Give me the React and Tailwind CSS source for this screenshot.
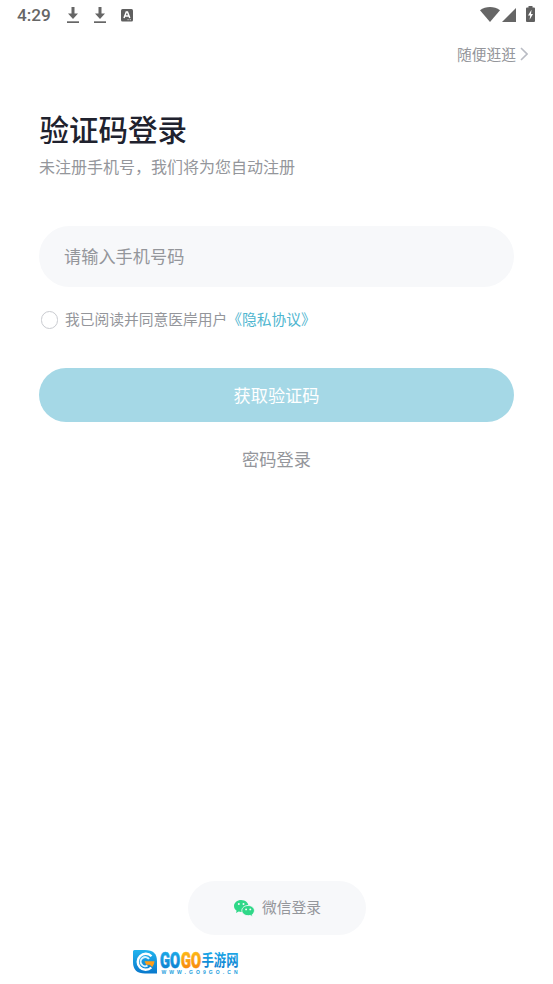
import React from "react";

const DownloadIcon = () => (
  <svg width="12" height="17" viewBox="0 0 12 17" fill="#666666">
    <path d="M4.500 0h3v6.500H11L6 12 1 6.500h3.500z" />
    <rect x="0" y="14.300" width="12" height="1.700" />
  </svg>
);

const KeyboardIcon = () => (
  <svg width="12" height="13" viewBox="0 0 12 13">
    <rect width="12" height="12.500" rx="1.500" fill="#5f5f5f" />
    <path
      d="M3 9 5.300 3h1.200L8.800 9M4 7h3.800"
      fill="none"
      stroke="#fff"
      strokeWidth="1.500"
    />
    <path d="M6.500 10.700h1.200M8.700 10.700h1.300" stroke="#ddd" strokeWidth="0.900" />
  </svg>
);

const WifiIcon = () => (
  <svg width="20" height="15" viewBox="0 0 20 15" fill="#666666">
    <path d="M0 3.300C5.800-1.100 14.200-1.100 20 3.300L10 15z" />
  </svg>
);

const SignalIcon = () => (
  <svg width="14" height="14" viewBox="0 0 14 14" fill="#666666">
    <path d="M14 0v14H0z" />
  </svg>
);

const BatteryIcon = () => (
  <svg width="9" height="16" viewBox="0 0 9 16">
    <path
      d="M2.500 0h4v1.600H8q1 0 1 1V15q0 1-1 1H1q-1 0-1-1V2.600q0-1 1-1h1.500z"
      fill="#606060"
    />
    <path d="M5.500 3.800 2 9.500h2.200l-.6 4.300L7 8H5z" fill="#fff" />
  </svg>
);

const WechatIcon = () => (
  <svg width="21" height="17" viewBox="0 0 21 17">
    <g fill="#2fd888">
      <path d="M7.200 0C3.200 0 0 2.700 0 6.100c0 1.900 1 3.600 2.600 4.700L2 13l2.700-1.400c.8.200 1.700.4 2.600.4 4 0 7.200-2.600 7.200-5.900S11.200 0 7.200 0z" />
      <path
        d="M14.200 5.500c-3.600 0-6.400 2.300-6.400 5.100s2.800 5.100 6.400 5.100c.8 0 1.500-.1 2.200-.3l2.400 1.400-.6-2.100c1.400-.9 2.200-2.400 2.200-4.100 0-2.800-2.700-5.100-6.200-5.100z"
        stroke="#f7f8fa"
        strokeWidth="0.900"
      />
    </g>
    <g fill="#f7f8fa">
      <circle cx="4.800" cy="3.900" r="1" />
      <circle cx="9.500" cy="3.900" r="1" />
      <circle cx="12.100" cy="9.400" r="0.950" />
      <circle cx="16.300" cy="9.400" r="0.950" />
    </g>
  </svg>
);

const SiteLogo = () => (
  <svg width="108" height="28" viewBox="0 0 108 28" className="overflow-visible">
    <defs>
      <linearGradient id="blue" x1="0" y1="0" x2="0" y2="1">
        <stop offset="0" stopColor="#22b4ee" />
        <stop offset="1" stopColor="#0878cc" />
      </linearGradient>
      <linearGradient id="orange" x1="0" y1="0" x2="0" y2="1">
        <stop offset="0" stopColor="#ffc81a" />
        <stop offset="1" stopColor="#f77c08" />
      </linearGradient>
    </defs>
    <path d="M2.500 1H13q12 0 12 11v12.500H13Q1 24.500 1 13V2.500Q1 1 2.500 1z" fill="url(#blue)" />
    <path
      d="M19.500 7.300A8 8 0 1 0 19.300 18.500"
      fill="none"
      stroke="#fff"
      strokeWidth="2.400"
    />
    <path
      d="M17 10A4.600 4.600 0 1 0 15.500 16.700"
      fill="none"
      stroke="#d9f3ff"
      strokeWidth="2"
    />
    <path d="M12.500 12.300H22.500q0 3-2.300 5.700l-2.500-2.300h-3.500z" fill="#ff9d18" />
    <g
      fontFamily="'Roboto', 'Liberation Sans', sans-serif"
      fontWeight="900"
      fontSize="22.500"
      strokeWidth="0.700"
    >
      <text
        x="28"
        y="18.500"
        textLength="20"
        lengthAdjust="spacingAndGlyphs"
        fill="url(#blue)"
        stroke="url(#blue)"
      >
        GO
      </text>
      <text
        x="49"
        y="18.500"
        textLength="20"
        lengthAdjust="spacingAndGlyphs"
        fill="url(#orange)"
        stroke="url(#orange)"
      >
        GO
      </text>
    </g>
    <text
      x="69.500"
      y="17"
      textLength="37"
      lengthAdjust="spacingAndGlyphs"
      fontFamily="'Noto Sans CJK SC', sans-serif"
      fontWeight="700"
      fontSize="15.500"
      fill="url(#blue)"
    >
      手游网
    </text>
    <text
      x="29.500"
      y="24.800"
      textLength="76"
      fontFamily="'Liberation Sans', sans-serif"
      fontWeight="700"
      fontSize="5"
      fill="#1c9ddd"
    >
      WWW.GO9GO.CN
    </text>
  </svg>
);

const StatusBar = () => (
  <div className="flex h-8 items-start justify-between pl-[17px] pr-[18px]">
    <div className="flex items-start">
      <span className="mt-[5px] w-[50px] font-[Roboto] text-[17.200px] leading-5 text-[#666666] font-medium">
        4:29
      </span>
      <span className="mt-[7px] flex items-start gap-[15px]">
        <DownloadIcon />
        <DownloadIcon />
        <span className="mt-[2px]">
          <KeyboardIcon />
        </span>
      </span>
    </div>
    <div className="flex items-start pt-[7px]">
      <WifiIcon />
      <span className="ml-[2px] mt-px">
        <SignalIcon />
      </span>
      <span className="ml-[10px] -mt-px">
        <BatteryIcon />
      </span>
    </div>
  </div>
);

const App = () => {
  return (
    <div
      lang="zh-CN"
      className="flex h-[984px] w-[553px] flex-col overflow-hidden bg-white font-['Noto_Sans_CJK_SC',sans-serif] text-[#94969b]"
    >
      <StatusBar />
      <div className="flex h-[44px] items-center justify-end pr-[25px]">
        <button className="flex items-center gap-1 text-[14.750px] leading-5">
          随便逛逛
          <svg width="8" height="14" viewBox="0 0 8 14" fill="none" stroke="#b9bcc4" strokeWidth="1.600">
            <path d="M1 1l6 6-6 6" />
          </svg>
        </button>
      </div>

      <main className="flex flex-col px-[39px] pt-[31px]">
        <h1 className="pl-[0.500px] text-[29.500px] leading-[42px] font-medium text-[#20222e]">
          验证码登录
        </h1>
        <p className="mt-[5px] text-[16px] leading-6">
          未注册手机号，我们将为您自动注册
        </p>

        <input
          type="tel"
          placeholder="请输入手机号码"
          className="mt-[48px] h-[61px] w-full rounded-full bg-[#f7f8fa] px-[25px] pb-[2px] text-[17.200px] outline-none placeholder:text-[#94969b]"
        />

        <div className="mt-[21px] flex h-6 items-center pl-[1.500px] text-[14.750px]">
          <span className="mr-[7px] size-[17.500px] rounded-full border border-[#c9cbd0]" />
          <span className="pb-px">我已阅读并同意医岸用户</span>
          <a className="pb-px text-[#4fb6d0]">《隐私协议》</a>
        </div>

        <button className="mt-[36.300px] h-[54px] w-full rounded-full bg-[#a5d8e6] text-[17.200px] text-white">
          获取验证码
        </button>
        <button className="mt-[24.700px] self-center text-[17.200px] leading-6">
          密码登录
        </button>
      </main>

      <button className="mt-auto flex h-[54px] w-[178px] items-center justify-center gap-[7px] self-center rounded-full bg-[#f7f8fa] pl-[2px] text-[14.750px]">
        <WechatIcon />
        <span className="pb-px">微信登录</span>
      </button>
      <footer className="mt-[14px] mb-[7px] ml-[132px] h-[28px]">
        <SiteLogo />
      </footer>
    </div>
  );
};

export default App;
